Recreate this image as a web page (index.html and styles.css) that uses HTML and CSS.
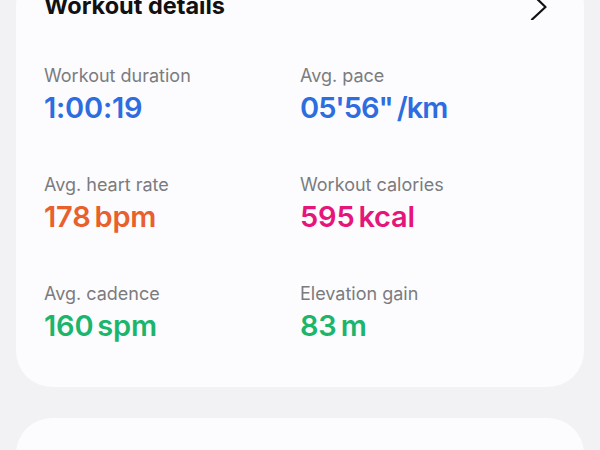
FILE: index.html
```html
<!DOCTYPE html>
<html>
<head>
<meta charset="utf-8">
<link rel="stylesheet" href="styles.css">
</head>
<body>
<div class="card details">
  <div class="card-header">
    <h2 class="title">Workout details</h2>
    <svg class="chevron" width="20" height="28" viewBox="0 0 20 28"><path d="M4 2 L17.5 15 L4 27.5" fill="none" stroke="#111" stroke-width="2.2" stroke-linecap="round" stroke-linejoin="round"/></svg>
  </div>
  <div class="stats">
    <div class="stat">
      <div class="label">Workout duration</div>
      <div class="value blue">1:00:19</div>
    </div>
    <div class="stat">
      <div class="label">Avg. pace</div>
      <div class="value blue tight">05'56"<span class="unit">/km</span></div>
    </div>
    <div class="stat">
      <div class="label">Avg. heart rate</div>
      <div class="value orange">178<span class="unit">bpm</span></div>
    </div>
    <div class="stat">
      <div class="label">Workout calories</div>
      <div class="value pink">595<span class="unit">kcal</span></div>
    </div>
    <div class="stat">
      <div class="label">Avg. cadence</div>
      <div class="value green">160<span class="unit">spm</span></div>
    </div>
    <div class="stat">
      <div class="label">Elevation gain</div>
      <div class="value green">83<span class="unit">m</span></div>
    </div>
  </div>
</div>
<div class="card next"></div>
</body>
</html>
```

FILE: styles.css
```css
html, body {
  margin: 0;
  padding: 0;
}
body {
  background: #f2f2f4;
  font-family: Inter, "Noto Sans", sans-serif;
  padding: 0 16px;
  height: 450px;
  overflow: hidden;
}
.card {
  background: #fcfcfe;
  border-radius: 36px;
}
.details {
  margin-top: -30px;
  padding: 22px 28px 44px;
}
.card-header {
  display: flex;
  align-items: center;
  justify-content: space-between;
  height: 28px;
}
.title {
  margin: 0;
  font-size: 23.5px;
  line-height: 28px;
  font-weight: 700;
  color: #111;
}
.chevron {
  display: block;
  margin-right: 8px;
}
.stats {
  display: grid;
  grid-template-columns: 1fr 1fr;
  row-gap: 49px;
  margin-top: 45px;
}
.label {
  font-size: 18px;
  line-height: 22px;
  color: #7b7b7e;
}
.value {
  margin-top: 4px;
  font-size: 29px;
  line-height: 34px;
  font-weight: 600;
  letter-spacing: -0.2px;
}
.value.tight {
  letter-spacing: -1px;
}
.unit {
  margin-left: 4px;
}
.blue { color: #2d6de0; }
.orange { color: #e8602c; }
.pink { color: #e6157a; }
.green { color: #1db56a; }
.next {
  margin-top: 31px;
  height: 100px;
}
```
